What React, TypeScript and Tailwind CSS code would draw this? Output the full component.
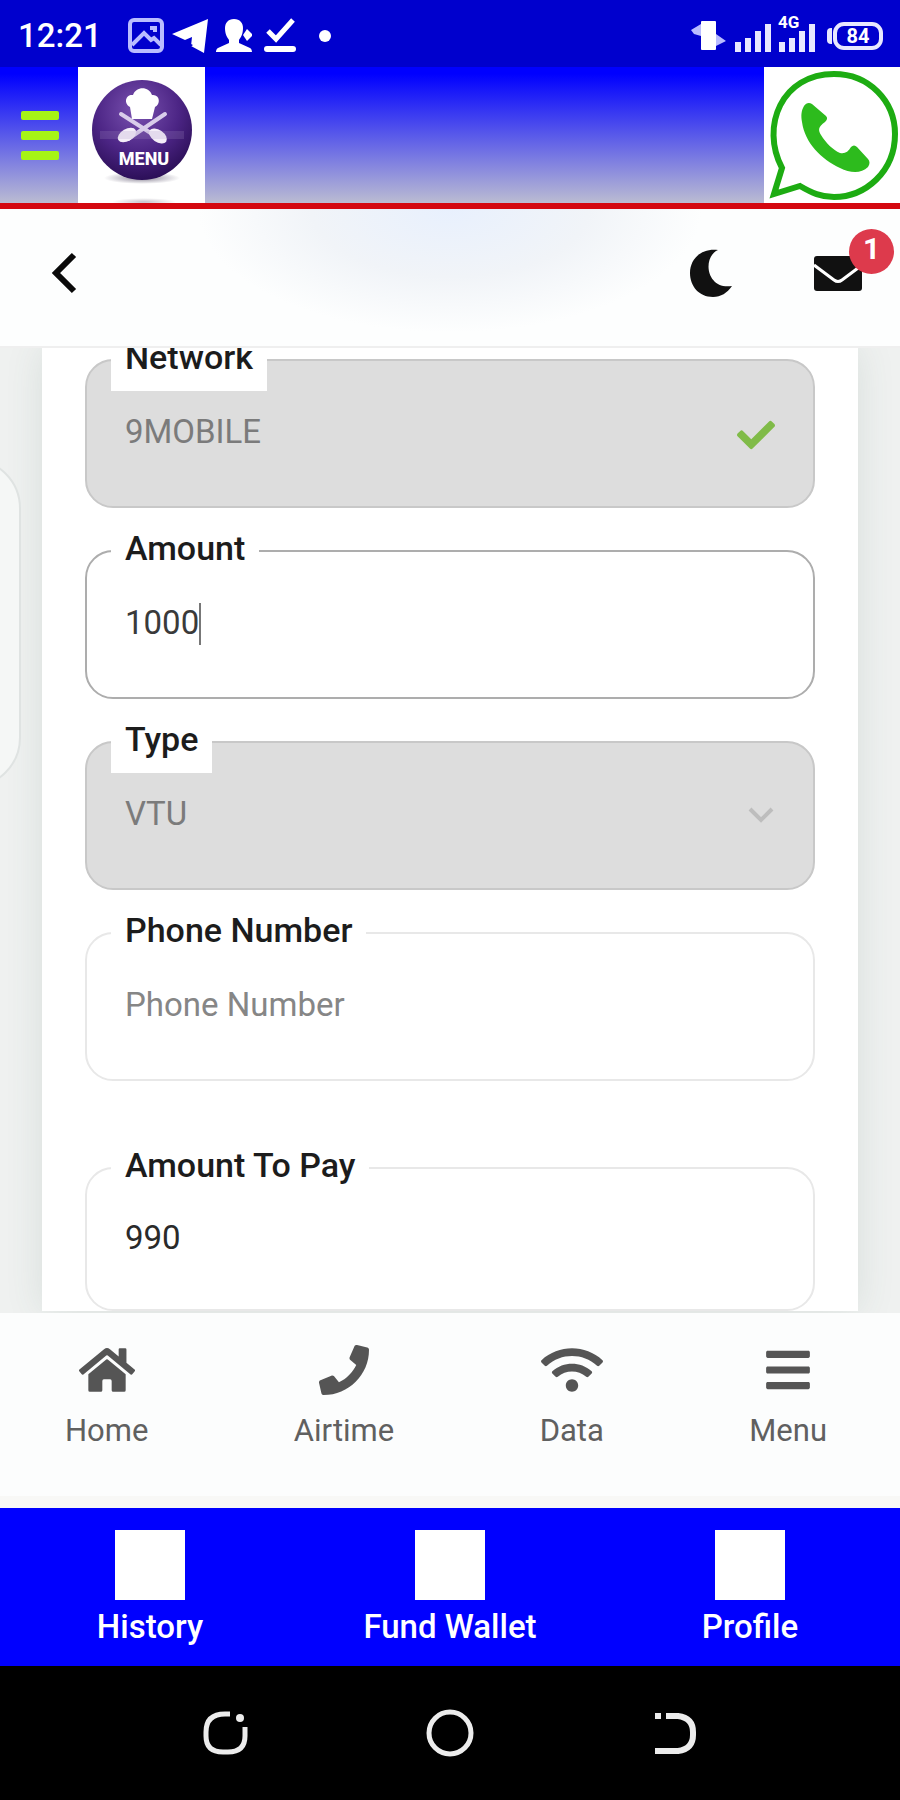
import { memo, useState } from 'react';
import type { ReactNode } from 'react';
import { FaBars, FaCheck, FaHome, FaPhone, FaWifi } from 'react-icons/fa';

const signalBars = [10, 14, 21, 28];

const StatusBar = memo(function StatusBar() {
  return (
    <div className="flex h-[67px] items-center bg-[#0000cd] pt-1 pr-[17px] pl-[18px] text-white">
      <span className="text-[33px] leading-10 font-medium">12:21</span>
      <div className="ml-[26px] flex items-center gap-2">
        <svg className="h-9 w-9" viewBox="0 0 36 36" fill="none" stroke="#b9bcff" strokeWidth="4">
          <rect x="2" y="2" width="32" height="31" rx="4" />
          <path d="M4 27l12-12 7 7 3-2 7 7" />
          <path d="M22 10h5v4" />
        </svg>
        <svg className="h-9 w-9" viewBox="0 0 36 36" fill="white">
          <path d="M0 16L36 1l-4 34-13-7 1-9-7 3z" />
          <path d="M15 24l6 3-5 4z" fill="#0000cd" />
        </svg>
        <svg className="h-9 w-9" viewBox="0 0 36 36" fill="white">
          <path d="M18 1c6 0 9 4 9 9 0 6-2 9-4 12v3l11 5c2 1 2 4 2 4H0s0-3 2-4l11-5v-3c-2-3-4-6-4-12 0-5 3-9 9-9z" />
          <path d="M31 11l6 6-6 6-4-6z" />
        </svg>
        <svg className="ml-1 h-9 w-8" viewBox="0 0 32 36" fill="none" stroke="white">
          <path d="M4 13l8 8L29 2" strokeWidth="5" />
          <path d="M3 31h26" strokeWidth="6" strokeLinecap="round" />
        </svg>
      </div>
      <span className="ml-[23px] h-3 w-3 rounded-full bg-white" />

      <div className="ml-auto flex items-center gap-2">
        <svg className="h-9 w-9" viewBox="0 0 36 36" fill="white">
          <rect x="10" y="3" width="15" height="29" rx="1" />
          <path d="M0 12l10-6v12l-7-2zM25 16l10 7-10 5z" fill="#b9bcff" />
        </svg>
        <div className="flex h-8 w-9 items-end justify-between">
          {signalBars.map((height) => (
            <span key={height} className="w-[6px] bg-[#e8e8ff]" style={{ height }} />
          ))}
        </div>
        <div className="relative flex h-8 w-9 items-end justify-between">
          {signalBars.map((height) => (
            <span key={height} className="w-[6px] bg-[#e8e8ff]" style={{ height }} />
          ))}
          <span className="absolute -top-2 -left-px text-[17px] leading-5 font-bold">4G</span>
        </div>
        <div className="ml-1 flex items-center">
          <span className="h-4 w-[5px] rounded-l-sm bg-[#e8e8ff]" />
          <span className="ml-px flex h-7 w-[50px] items-center justify-center rounded-[11px] border-4 border-[#e8e8ff] text-[20px] leading-5 font-bold">
            84
          </span>
        </div>
      </div>
    </div>
  );
});

function MenuLogo() {
  return (
    <svg className="h-[136px] w-[127px] bg-white" viewBox="0 0 127 136">
      <defs>
        <radialGradient id="logoFill" cx="0.45" cy="0.3" r="0.7">
          <stop offset="0" stopColor="#7a52b0" />
          <stop offset="0.6" stopColor="#4c2585" />
          <stop offset="1" stopColor="#2c0f58" />
        </radialGradient>
        <radialGradient id="logoShadow">
          <stop offset="0" stopColor="#8a8496" />
          <stop offset="1" stopColor="#ffffff" />
        </radialGradient>
      </defs>
      <ellipse cx="64" cy="111" rx="38" ry="6" fill="url(#logoShadow)" />
      <ellipse cx="66" cy="135" rx="32" ry="4" fill="url(#logoShadow)" opacity="0.5" />
      <circle cx="64" cy="63" r="50" fill="url(#logoFill)" />
      <path d="M54 52l-2-12c-7-4-4-13 3-12 3-9 16-9 19 0 8-1 9 9 3 12l-3 12z" fill="white" />
      <path d="M43 47l39 25M87 47L50 72" stroke="#d9cdea" strokeWidth="4" strokeLinecap="round" />
      <ellipse cx="49" cy="68" rx="10" ry="6" transform="rotate(-30 49 68)" fill="#f4eef8" />
      <ellipse cx="80" cy="69" rx="10" ry="6" transform="rotate(35 80 69)" fill="#f4eef8" />
      <path d="M22 68h84" stroke="#a995c6" strokeWidth="8" opacity="0.2" />
      <text x="66" y="98" textAnchor="middle" fontSize="18" fontWeight="800" fill="white">
        MENU
      </text>
    </svg>
  );
}

function WhatsAppLogo() {
  return (
    <svg className="h-[136px] w-[136px] bg-white" viewBox="0 0 136 136">
      <path
        d="M10 127L18 101C-4 59 18 7 70 7c35 0 61 27 61 60 0 38-30 63-61 63-13 0-22-4-34-11z"
        fill="none"
        stroke="#1dac12"
        strokeWidth="6"
      />
      <path
        d="M40 39c2-3 5-4 8-2l14 12c2 2 1 4-1 6-7 5-7 8-4 13 5 8 12 15 19 18 5 1 8-1 11-6 2-2 4-2 6 0l11 12c2 2 2 5 0 8-7 7-18 6-28 1C57 92 41 76 38 55c-1-6-1-11 2-16z"
        fill="#2dbb1d"
      />
    </svg>
  );
}

function SiteHeader() {
  return (
    <header className="flex items-center justify-between border-b-[6px] border-[#d40810] bg-linear-to-b/srgb from-[#0000ff] from-5% to-[#bbbcd2]">
      <div className="flex items-center">
        <button type="button" aria-label="Open menu" className="mr-[19px] ml-[21px] flex w-[38px] flex-col gap-[11px]">
          <span className="h-[9px] rounded-xs bg-[#a6f416]" />
          <span className="h-[9px] rounded-xs bg-[#a6f416]" />
          <span className="h-[9px] rounded-xs bg-[#a6f416]" />
        </button>
        <a href="#menu" aria-label="Menu">
          <MenuLogo />
        </a>
      </div>
      <a href="#whatsapp" aria-label="WhatsApp">
        <WhatsAppLogo />
      </a>
    </header>
  );
}

function TopBar() {
  return (
    <div className="relative z-20 flex items-center justify-between border-b-2 border-[#efefef] bg-[#fdfefe] bg-[radial-gradient(ellipse_28%_90%_at_50%_0%,#e8f0fd_0%,#f1f4f8_55%,#fdfefe_100%)] px-[38px] pt-9 pb-[45px]">
      <button type="button" aria-label="Back" className="flex h-14 w-[52px] items-center justify-center">
        <svg className="h-11 w-8" viewBox="0 0 32 44" fill="none" stroke="#0a0a0a" strokeWidth="6">
          <path d="M26 4L8 22l18 18" />
        </svg>
      </button>
      <div className="flex items-center gap-20">
        <button type="button" aria-label="Dark mode">
          <svg className="h-12 w-11" viewBox="0 0 44 48" fill="#111">
            <path d="M28 1C12 8 16 41 42 37 37 44 31 48 23 48 9 48 0 37 0 24 0 10 11-1 28 1z" />
          </svg>
        </button>
        <button type="button" aria-label="Messages" className="relative">
          <svg className="h-[35px] w-12" viewBox="0 0 48 35">
            <rect width="48" height="35" rx="3" fill="#111" />
            <path d="M0 9l20 15q4 3 8 0L48 9" fill="none" stroke="white" strokeWidth="3" />
          </svg>
          <span className="absolute -top-[27px] -right-8 flex h-[45px] w-[45px] items-center justify-center rounded-full bg-[#dd3a4c] pb-1 text-[30px] leading-8 font-bold text-white">
            1
          </span>
        </button>
      </div>
    </div>
  );
}

interface FieldProps {
  id: string;
  label: string;
  children: ReactNode;
}

function Field({ id, label, children }: FieldProps) {
  return (
    <div className="relative">
      {children}
      <label
        htmlFor={id}
        className="absolute -top-9 left-[26px] bg-white px-[14px] text-[34px] leading-[68px] font-medium whitespace-nowrap text-[#1c1c1c]"
      >
        {label}
      </label>
    </div>
  );
}

const fieldBase = 'block w-full appearance-none rounded-[28px] border-2 pr-24 pb-1 pl-[38px] text-[33px] outline-none';

function AirtimeForm() {
  const [amount, setAmount] = useState('1000');
  const [phone, setPhone] = useState('');

  return (
    <form className="flex flex-col gap-[42px] bg-white px-[43px] pt-[11px] shadow-[0_0_36px_rgba(60,95,85,0.12)]">
      <Field id="network" label="Network">
        <select id="network" disabled className={`${fieldBase} h-[149px] border-[#c8c8c8] bg-[#dddddd] text-[#7b7b7b] opacity-100`}>
          <option>9MOBILE</option>
        </select>
        <FaCheck className="pointer-events-none absolute top-[57px] right-10 h-[38px] w-[38px] text-[#80bb48]" />
      </Field>

      <Field id="amount" label="Amount">
        <input
          id="amount"
          inputMode="numeric"
          value={amount}
          onChange={(e) => setAmount(e.target.value)}
          className={`${fieldBase} h-[149px] border-[#adadad] bg-white text-[#3a3a3a]`}
        />
        <span className="pointer-events-none absolute top-[53px] left-[114px] h-[42px] w-[2px] bg-[#777]" />
      </Field>

      <Field id="type" label="Type">
        <select id="type" disabled className={`${fieldBase} h-[149px] border-[#c8c8c8] bg-[#dddddd] text-[#7b7b7b] opacity-100`}>
          <option>VTU</option>
        </select>
        <svg
          className="pointer-events-none absolute top-[64px] right-10 h-5 w-7"
          viewBox="0 0 28 20"
          fill="none"
          stroke="#bdbdbd"
          strokeWidth="4"
        >
          <path d="M3 4l11 11L25 4" />
        </svg>
      </Field>

      <Field id="phone" label="Phone Number">
        <input
          id="phone"
          type="tel"
          placeholder="Phone Number"
          value={phone}
          onChange={(e) => setPhone(e.target.value)}
          className={`${fieldBase} h-[149px] border-[#e8e8e8] bg-white text-[#3a3a3a] placeholder:text-[#868686]`}
        />
      </Field>

      <div className="pt-11">
        <Field id="total" label="Amount To Pay">
          <input id="total" readOnly value="990" className={`${fieldBase} h-36 border-[#e8e8e8] bg-white text-[#2a2a2a]`} />
        </Field>
      </div>
    </form>
  );
}

const tabs = [
  { label: 'Home', icon: <FaHome className="h-[50px] w-14" /> },
  { label: 'Airtime', icon: <FaPhone className="h-[50px] w-[50px]" /> },
  { label: 'Data', icon: <FaWifi className="h-[50px] w-[62px]" /> },
  { label: 'Menu', icon: <FaBars className="h-[50px] w-11" /> },
];

const shortcuts = ['History', 'Fund Wallet', 'Profile'];

function BottomTabs() {
  return (
    <nav className="relative z-20 flex justify-between border-b-[12px] border-[#f8f8f6] bg-[#fcfdfd] pt-8 pr-[73px] pb-[45px] pl-[65px]">
      {tabs.map((tab) => (
        <a key={tab.label} href={`#${tab.label.toLowerCase()}`} className="flex flex-col items-center gap-4 text-[#555]">
          {tab.icon}
          <span className="text-[31px] leading-10 text-[#606060]">{tab.label}</span>
        </a>
      ))}
    </nav>
  );
}

function Shortcuts() {
  return (
    <nav className="grid grid-cols-3 bg-[#0000ff] pt-[22px] pb-5">
      {shortcuts.map((name) => (
        <a key={name} href="#shortcut" className="flex flex-col items-center gap-2 text-white">
          <span className="h-[70px] w-[70px] bg-white" />
          <span className="text-[33px] leading-[38px] font-medium">{name}</span>
        </a>
      ))}
    </nav>
  );
}

function SystemNav() {
  return (
    <div className="grid grid-cols-3 justify-items-center bg-black px-[12.5%] py-[43px]">
      <button type="button" aria-label="Recent apps">
        <svg className="h-12 w-12" viewBox="0 0 48 48" fill="none" stroke="#ececec" strokeWidth="5">
          <path d="M29 5h-5Q5 5 5 23v4q0 16 17 16h5q17 0 17-16v-9" />
          <circle cx="39" cy="9" r="4" fill="#ececec" stroke="none" />
        </svg>
      </button>
      <button type="button" aria-label="Home screen">
        <svg className="h-12 w-12" viewBox="0 0 48 48" fill="none" stroke="#ececec" strokeWidth="5">
          <circle cx="24" cy="24" r="21" />
        </svg>
      </button>
      <button type="button" aria-label="Go back">
        <svg className="h-12 w-12" viewBox="0 0 48 48" fill="none" stroke="#ececec" strokeWidth="6">
          <path d="M4 7h6M15 7h12q15 2 15 16v3q0 14-15 16H4" />
        </svg>
      </button>
    </div>
  );
}

export default function App() {
  return (
    <div className="flex min-h-screen flex-col bg-white font-[Roboto,sans-serif]">
      <StatusBar />
      <SiteHeader />
      <TopBar />
      <main className="relative flex-1 basis-0 overflow-hidden bg-[#eff1f0] px-[42px]">
        {/* drawer handle peeking in from the left edge */}
        <div className="absolute top-[110px] -left-[80px] h-[330px] w-[101px] rounded-[64px] border-2 border-[#dfe3e2] bg-[#f5f7f6]" />
        <AirtimeForm />
      </main>
      <BottomTabs />
      <Shortcuts />
      <SystemNav />
    </div>
  );
}
